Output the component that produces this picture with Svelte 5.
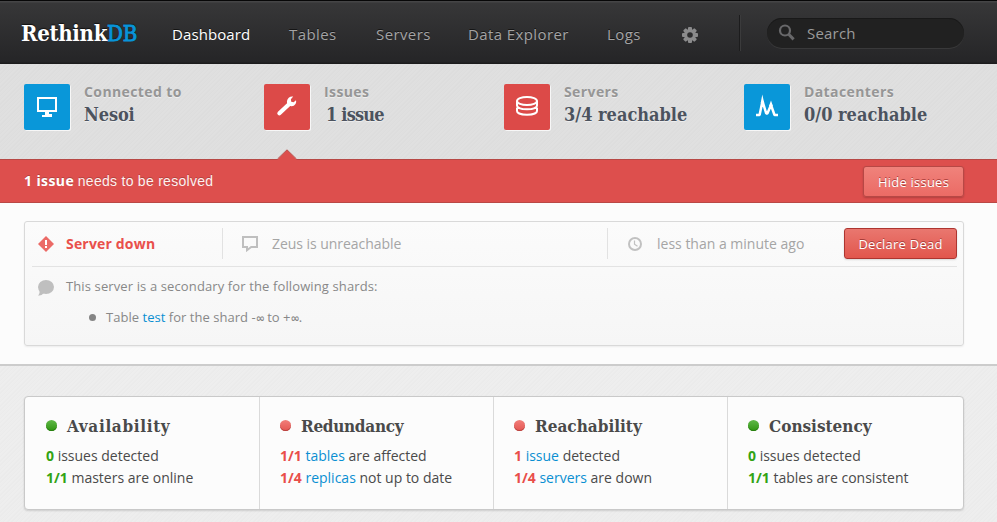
<script>
  const nav = ['Dashboard', 'Tables', 'Servers', 'Data Explorer', 'Logs'];
  const stats = [
    { icon: 'screen', label: 'Connected to', value: 'Nesoi', cls: 'nesoi' },
    { icon: 'wrench', label: 'Issues', value: '1 issue', bad: true, cls: 'issue' },
    { icon: 'stack', label: 'Servers', value: '3/4 reachable', bad: true, cls: 'reach' },
    { icon: 'pulse', label: 'Datacenters', value: '0/0 reachable', cls: 'reach' }
  ];
  const checks = [
    { title: 'Availability', cls: 'wide', rows: [['0', '', 'issues detected'], ['1/1', '', 'masters are online']] },
    { title: 'Redundancy', cls: 'tight', bad: true, rows: [['1/1', 'tables', 'are affected'], ['1/4', 'replicas', 'not up to date']] },
    { title: 'Reachability', cls: '', bad: true, rows: [['1', 'issue', 'detected'], ['1/4', 'servers', 'are down']] },
    { title: 'Consistency', cls: '', rows: [['0', '', 'issues detected'], ['1/1', '', 'tables are consistent']] }
  ];
</script>

<div class="page">
  <header>
    <div class="logo"><span>Rethink</span><span class="db">DB</span></div>
    <nav>
      {#each nav as item, i}
        <a class:active={i === 0}>{item}</a>
      {/each}
    </nav>
    <svg class="gear" width="16" height="16" viewBox="0 0 16 16">
      <g fill="#8b8b8c">
        {#each [0, 45, 90, 135] as a}
          <rect x="6" y="0" width="4" height="16" rx="1" transform="rotate({a} 8 8)" />
        {/each}
        <circle cx="8" cy="8" r="6" />
      </g>
      <circle cx="8" cy="8" r="2.8" fill="#2d2d2e" />
    </svg>
    <div class="sep"></div>
    <div class="search">
      <svg width="18" height="18" viewBox="0 0 18 18" fill="none" stroke="#68686a">
        <circle cx="7" cy="6.5" r="5" stroke-width="2.2" />
        <path d="M10.7 10.3 15.6 15.4" stroke-width="3" />
      </svg>
      <span>Search</span>
    </div>
  </header>

  <section class="status">
    {#each stats as s}
      <div class="stat">
        <div class="tile" class:bad={s.bad}>
          <svg width="46" height="46" viewBox="0 0 46 46" fill="none" stroke="#fff">
            {#if s.icon === 'screen'}
              <path d="M14 14h18v13H14z" stroke-width="2" />
              <path d="M21 28h4v2h3v3H18v-2h3z" fill="#fff" stroke="none" />
            {:else if s.icon === 'wrench'}
              <path d="M15.4 29.2 25 20.2" stroke-width="4.2" stroke-linecap="round" />
              <path d="M29.2 12.6 26.9 15.2 27.2 17.8 29.6 18.3 32 16.2C32.8 19.3 30.7 22 27.8 22.2C24.7 22.4 22.5 19.8 23 17.1C23.5 14.3 26.1 12 29.2 12.6Z" fill="#fff" stroke="none" />
            {:else if s.icon === 'stack'}
              <ellipse cx="23" cy="17" rx="10" ry="4" stroke-width="2" />
              <path d="M13 17v4.600c0 5 20 5 20 0V17M13 23.700v3.300c0 5 20 5 20 0v-3.300" stroke-width="2" />
            {:else}
              <path d="M12 31h3.600L18.500 17 22.200 29.500h1.200L27 21 30.500 31H34" stroke-width="2.500" stroke-linejoin="bevel" />
              <path d="M18.300 10.500 20.200 19 16.700 19ZM27 16.500 28.900 22 25 22Z" fill="#fff" stroke="none" />
            {/if}
          </svg>
        </div>
        <div class="words">
          <div class="label">{s.label}</div>
          <div class="value {s.cls}">{s.value}</div>
        </div>
      </div>
    {/each}
  </section>

  <section class="banner">
    <svg class="notch" width="20" height="11" viewBox="0 0 20 11">
      <path d="M0 11 10 1 20 11Z" fill="#dd4f4d" />
      <path d="M.5 10 10 .8 19.5 10" fill="none" stroke="#b74542" />
    </svg>
    <div class="message"><b>1 issue</b> <span>needs to be resolved</span></div>
    <button class="hide">Hide issues</button>
  </section>

  <section class="issues">
    <div class="panel">
      <div class="top">
        <div class="kind">
          <svg width="16" height="16" viewBox="0 0 16 16">
            <path d="M8 0 16 8 8 16 0 8Z" fill="#eb6a66" />
            <path d="M7 4h2v5H7zM7 10h2v2H7z" fill="#fff" />
          </svg>
          <b>Server down</b>
        </div>
        <div class="detail">
          <svg width="16" height="16" viewBox="0 0 16 16">
            <path d="M1 1h14v10H9.2L5 14.2V11H1z" fill="none" stroke="#bfbfbf" stroke-width="2" />
          </svg>
          <span>Zeus is unreachable</span>
        </div>
        <div class="time">
          <svg width="14" height="14" viewBox="0 0 14 14" fill="none" stroke="#c1c1c1">
            <circle cx="7" cy="7" r="6" stroke-width="2" />
            <path d="M6.500 3.500v3.800l3 2" stroke-width="1.200" />
          </svg>
          <span>less than a minute ago</span>
        </div>
        <button class="dead">Declare Dead</button>
      </div>
      <div class="bottom">
        <svg width="16" height="16" viewBox="0 0 16 16">
          <ellipse cx="8" cy="7" rx="8" ry="7" fill="#bfbfbf" />
          <path d="M1.500 10Q2.200 13.500.2 15.700Q4 15.600 6 13Z" fill="#bfbfbf" />
        </svg>
        <div>
          <p>This server is a secondary for the following shards:</p>
          <div class="shard"><i></i><span>Table <a>test</a> for the shard -<em>∞</em> to +<em>∞</em>.</span></div>
        </div>
      </div>
    </div>
  </section>

  <main>
    <div class="checks">
      {#each checks as c}
        <div class="check" class:bad={c.bad}>
          <h2 class={c.cls}><i></i><span>{c.title}</span></h2>
          {#each c.rows as r}
            <p><b>{r[0]}</b>{' '}{#if r[1]}<a>{r[1]}</a>{' '}{/if}{r[2]}</p>
          {/each}
        </div>
      {/each}
    </div>
  </main>
</div>

<style>
  .page { width: 997px; height: 522px; overflow: hidden; display: flex; flex-direction: column; font: 14px/22px 'Open Sans', sans-serif; color: #4a4a4a; background: #ececec; }
  .page * { box-sizing: border-box; }
  p, h2 { margin: 0; }
  svg { display: block; flex: none; }
  a { color: #0a8fd2; }
  header { height: 64px; flex: none; display: flex; align-items: flex-start; padding-left: 21px; background: linear-gradient(#070707 0 1px, #454546 1px 2px, #373738 3px, #252527 62px, #1c1c1d 63px); }
  .logo { width: 151px; padding-top: 19px; font: bold 22px/28px 'DejaVu Serif Condensed', 'DejaVu Serif', serif; font-stretch: condensed; letter-spacing: -.3px; color: #fff; text-shadow: 0 -1px 1px #111; white-space: nowrap; }
  .db { color: #0894d8; font-weight: normal; letter-spacing: -.3px; -webkit-text-stroke: .9px #0894d8; }
  nav { width: 510px; display: grid; grid-template-columns: 117px 87px 92px 139px 75px; padding-top: 23px; }
  nav a { font-size: 15px; letter-spacing: .4px; color: #a3a3a4; white-space: nowrap; text-shadow: 0 -1px #151515; }
  nav a.active { color: #fff; letter-spacing: .1px; }
  .gear { margin-top: 27px; }
  .sep { width: 2px; height: 36px; margin: 15px 25px 0 41px; background: #1c1c1d; border-right: 1px solid #3b3b3c; }
  .search { width: 197px; height: 30px; margin: 18px 0 0 1px; border-radius: 16px; background: #212121; box-shadow: inset 0 1px #191919, 0 1px #39393a; display: flex; align-items: center; padding-left: 11px; gap: 11px; color: #9b9b9b; font-size: 15px; letter-spacing: .2px; }
  .status { height: 95px; flex: none; display: flex; padding: 20px 0 0 24px; background: repeating-linear-gradient(135deg, #dfdfdf 0 1px, #dddddd 1px 2px, #e0e0e0 2px 3px); }
  .stat { width: 240px; display: flex; gap: 14px; }
  .tile { width: 46px; height: 46px; border-radius: 2px; background: #0997d9; box-shadow: 1px 1px #f7f7f7; }
  .tile.bad { background: #dc4a48; }
  .label { font-weight: bold; line-height: 16px; letter-spacing: .4px; color: #969696; text-shadow: 0 1px #eee; }
  .value { padding-top: 1px; font: bold 18px/28px 'DejaVu Serif Condensed', 'DejaVu Serif', serif; font-stretch: condensed; letter-spacing: 0; color: #4c535e; text-shadow: 0 1px #eee; white-space: nowrap; }
  .value.nesoi { letter-spacing: -.1px; }
  .value.issue { letter-spacing: -.8px; padding-left: 2px; }
  .banner { height: 44px; flex: none; position: relative; display: flex; align-items: center; justify-content: space-between; padding: 0 33px 0 24px; background: #dd4f4d; border-top: 1px solid #b74845; border-bottom: 1px solid #ba4845; color: #fff; }
  .notch { position: absolute; left: 277px; top: -11px; }
  .message { text-shadow: 0 -1px #b24340; }
  .message b { letter-spacing: .4px; }
  .message span { font-family: 'Liberation Sans', sans-serif; letter-spacing: .28px; color: #fff1f0; }
  button { font: 13px/30px 'Open Sans', sans-serif; color: #fff; border-radius: 3px; padding: 0; text-align: center; text-shadow: 0 -1px #a73c38; height: 31px; letter-spacing: .23px; }
  .hide { width: 101px; border: 1px solid #b74845; background: linear-gradient(#f0827b, #eb6b65); box-shadow: 0 1px 2px #0003; }
  .dead { width: 113px; border: 1px solid #ad3530; background: linear-gradient(#e9776f, #e2564d); box-shadow: 0 1px 2px #0002; }
  .issues { height: 163px; flex: none; background: #fcfcfc; border-bottom: 2px solid #ccc; padding: 18px 33px 0 24px; }
  .panel { height: 125px; border: 1px solid #d9d9d9; border-radius: 3px; background: linear-gradient(#fbfbfb, #f6f6f6); box-shadow: 0 1px 2px #0001; padding: 6px 6px 0 7px; }
  .top { height: 39px; border-bottom: 1px solid #e3e3e3; display: flex; color: #a5a5a5; }
  .top > div { height: 31px; display: flex; align-items: center; }
  .kind { width: 191px; border-right: 1px solid #e2e2e2; padding-left: 6px; gap: 12px; color: #e9504b; letter-spacing: .18px; }
  .detail { width: 385px; border-right: 1px solid #e2e2e2; padding-left: 19px; gap: 14px; letter-spacing: -.05px; }
  .time { width: 236px; padding-left: 20px; gap: 15px; }
  .bottom { display: flex; gap: 12px; padding: 13px 0 0 6px; font-size: 13px; line-height: 20px; color: #888; }
  .bottom p { margin-top: -4px; letter-spacing: .12px; }
  .shard { display: flex; align-items: center; gap: 10px; margin-top: 11px; padding-left: 23px; letter-spacing: .03px; }
  .shard em { font: bold 11px/1 'DejaVu Sans', sans-serif; letter-spacing: -1px; }
  .shard i { width: 7px; height: 7px; border-radius: 50%; background: #858585; }
  main { flex: 1; padding: 30px 33px 0 24px; background: repeating-linear-gradient(135deg, #ededed 0 1px, #ebebeb 1px 2px, #eee 2px 3px); }
  .checks { height: 114px; display: grid; grid-template-columns: 235px 234px 234px 1fr; border: 1px solid #c9c9c9; border-radius: 4px; background: #fcfcfc; box-shadow: 0 1px 2px #0002; }
  .check { padding: 15px 0 0 20px; border-right: 1px solid #dadada; white-space: nowrap; }
  .check:first-child { padding-left: 21px; }
  .check:last-child { border: 0; }
  h2 { display: flex; align-items: center; gap: 10px; height: 28px; margin-bottom: 5px; font: bold 17px/28px 'DejaVu Serif Condensed', 'DejaVu Serif', serif; font-stretch: condensed; letter-spacing: 0; }
  h2.wide { letter-spacing: .65px; }
  h2.tight { letter-spacing: -.3px; }
  h2 i { width: 11px; height: 11px; margin-top: -1px; border-radius: 50%; background: linear-gradient(#60b848, #2f9511); box-shadow: inset 0 -1px #287e10; }
  .bad h2 i { background: linear-gradient(#f17e79, #e55652); box-shadow: inset 0 -1px #b74440; }
  .check b { color: #32a314; }
  .check.bad b { color: #e94e4a; }
</style>
